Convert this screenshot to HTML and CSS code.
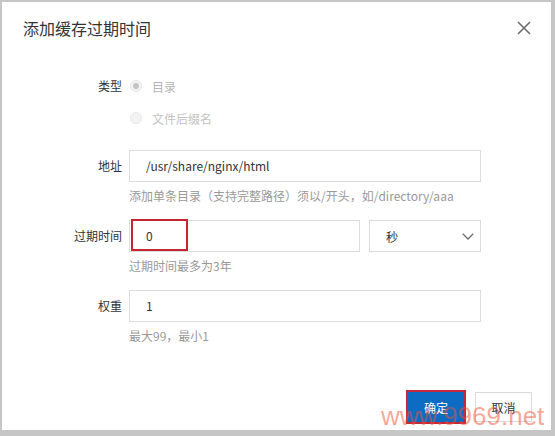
FILE: index.html
```html
<!DOCTYPE html>
<html lang="zh-CN">
<head>
<meta charset="utf-8">
<title>添加缓存过期时间</title>
<link rel="stylesheet" href="styles.css">
</head>
<body>
<div class="dialog">
  <header class="dlg-head">
    <h2 class="dlg-title">添加缓存过期时间</h2>
    <span class="dlg-close">
      <svg width="16" height="16" viewBox="0 0 16 16"><path d="M2 2 L14 14 M14 2 L2 14" stroke="#6b6b6b" stroke-width="1.6" fill="none"/></svg>
    </span>
  </header>
  <div class="dlg-form">
    <div class="field">
      <div class="lbl">类型</div>
      <div class="ctrl radio-group">
        <div class="radio checked"><span class="dot"></span><span>目录</span></div>
        <div class="radio"><span class="dot"></span><span>文件后缀名</span></div>
      </div>
    </div>
    <div class="field">
      <div class="lbl">地址</div>
      <div class="ctrl">
        <div class="input">/usr/share/nginx/html</div>
        <div class="help">添加单条目录（支持完整路径）须以/开头，如/directory/aaa</div>
      </div>
    </div>
    <div class="field">
      <div class="lbl">过期时间</div>
      <div class="ctrl">
        <div class="split">
          <div class="input input-short">0<span class="mark"></span></div>
          <div class="select"><span>秒</span>
            <svg width="12" height="7" viewBox="0 0 12 7"><polyline points="0.8,0.8 6,6 11.2,0.8" stroke="#6b6b6b" stroke-width="1.3" fill="none"/></svg>
          </div>
        </div>
        <div class="help">过期时间最多为3年</div>
      </div>
    </div>
    <div class="field">
      <div class="lbl">权重</div>
      <div class="ctrl">
        <div class="input">1</div>
        <div class="help">最大99，最小1</div>
      </div>
    </div>
  </div>
  <footer class="dlg-foot">
    <button class="btn btn-primary">确定</button>
    <button class="btn">取消</button>
  </footer>
</div>
<div class="watermark">www.9969.net</div>
</body>
</html>
```

FILE: styles.css
```css
html, body {
  margin: 0;
  width: 555px;
  height: 436px;
  overflow: hidden;
}
body {
  background: #c6c6c6;
  padding: 2px 4px 6px 2px;
  box-sizing: border-box;
  position: relative;
  font-family: "Noto Sans CJK SC", "Microsoft YaHei", sans-serif;
  font-size: 12px;
  color: #333;
}
.dialog {
  width: 549px;
  height: 428px;
  background: #fff;
  display: flex;
  flex-direction: column;
}
.dlg-head {
  height: 52px;
  display: flex;
  align-items: center;
  justify-content: space-between;
  padding: 0 19px 0 21px;
}
.dlg-title {
  margin: 0;
  font-size: 16px;
  font-weight: normal;
  color: #333;
  line-height: 20px;
}
.dlg-close {
  display: flex;
  width: 16px;
  height: 16px;
}
.dlg-form {
  display: flex;
  flex-direction: column;
  gap: 16px;
  padding-top: 16px;
}
.field {
  display: flex;
  gap: 7px;
  align-items: flex-start;
}
.lbl {
  width: 120px;
  text-align: right;
  line-height: 32px;
  color: #333;
}
.ctrl {
  width: 352px;
}
.radio-group {
  display: flex;
  flex-direction: column;
}
.radio {
  height: 32px;
  display: flex;
  align-items: center;
  gap: 10px;
  padding-left: 1px;
  color: #b5b5b5;
}
.radio .dot {
  width: 12px;
  height: 12px;
  box-sizing: border-box;
  border-radius: 50%;
  border: 1px solid #e6e6e6;
  background: #f4f4f4;
  display: flex;
  align-items: center;
  justify-content: center;
}
.radio.checked .dot::after {
  content: "";
  width: 6px;
  height: 6px;
  border-radius: 50%;
  background: #c4c4c4;
}
.radio:not(.checked) {
  color: #c2c2c2;
}
.input {
  height: 32px;
  box-sizing: border-box;
  border: 1px solid #dcdcdc;
  padding: 0 16px;
  line-height: 30px;
  color: #333;
  position: relative;
}
.split {
  display: flex;
  gap: 9px;
}
.input-short {
  width: 231px;
}
.mark {
  position: absolute;
  left: 1px;
  top: -2px;
  width: 57px;
  height: 32px;
  box-sizing: border-box;
  border: 2px solid #c3262f;
}
.select {
  width: 112px;
  height: 32px;
  box-sizing: border-box;
  border: 1px solid #dcdcdc;
  padding: 0 6px 0 16px;
  display: flex;
  align-items: center;
  justify-content: space-between;
  color: #333;
}
.help {
  margin-top: 6px;
  line-height: 16px;
  color: #999;
}
.dlg-foot {
  margin-top: auto;
  display: flex;
  justify-content: flex-end;
  gap: 11px;
  padding: 0 19px 8px 0;
}
.btn {
  width: 57px;
  height: 30px;
  box-sizing: border-box;
  border: 1px solid #d9d9d9;
  background: #fff;
  color: #333;
  font-family: inherit;
  font-size: 12px;
  padding: 0;
}
.btn-primary {
  width: 56px;
  background: #0c6cc4;
  border-color: #0c6cc4;
  color: #fff;
  outline: 2px solid #c5283a;
  outline-offset: 0;
}
.watermark {
  position: absolute;
  left: 381px;
  top: 403px;
  font-family: "Liberation Sans", Arial, sans-serif;
  font-size: 26px;
  line-height: 26px;
  color: rgba(238, 80, 50, 0.5);
  pointer-events: none;
  white-space: nowrap;
}
```
